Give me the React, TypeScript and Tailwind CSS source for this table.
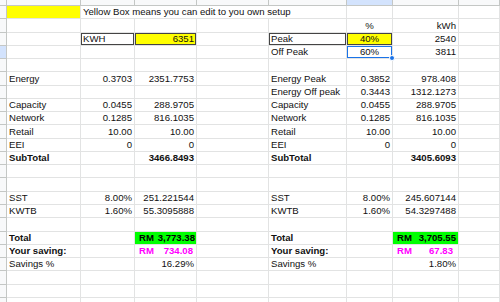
import type { ReactNode } from 'react'

type Cell = {
  text?: ReactNode
  align?: 'left' | 'right' | 'center'
  className?: string
  span?: number
}

// columns: row header, B .. I
const COLS = 'grid-cols-[7px_74px_54px_62px_72px_78px_46px_66px_41px]'
const ROW_COUNT = 23

const money = (amount: string, color: string, pr = 'pr-[2px]') => (
  <span className={`flex w-full justify-between pl-[4px] font-bold ${pr} ${color}`}>
    <span>RM</span>
    <span>{amount}</span>
  </span>
)

const line = (label: string, rate: string, value: string, bold = false): Cell[] => [
  { text: label, className: bold ? 'font-bold' : '' },
  { text: rate, align: 'right' },
  { text: value, align: 'right', className: bold ? 'font-bold' : '' },
]

// each row: map column index (1..8) -> cell
const rows: Record<number, Record<number, Cell>> = {
  0: {
    1: { className: 'bg-[#ffff00]' },
    2: { text: 'Yellow Box means you can edit to you own setup', span: 4, className: 'overflow-visible' },
  },
  1: {
    6: { text: '%', align: 'center' },
    7: { text: 'kWh', align: 'right' },
  },
  2: {
    2: { text: 'KWH', className: 'shadow-[inset_0_0_0_1px_#444]' },
    3: { text: '6351', align: 'right', className: 'bg-[#ffff00] shadow-[inset_0_0_0_1px_#444]' },
    5: { text: 'Peak', className: 'shadow-[inset_0_0_0_1px_#444]' },
    6: { text: '40%', align: 'center', className: 'bg-[#ffff00] shadow-[inset_0_0_0_1px_#444]' },
    7: { text: '2540', align: 'right' },
  },
  3: {
    5: { text: 'Off Peak' },
    6: { text: '60%', align: 'center', className: 'shadow-[inset_0_0_0_1px_#1a73e8]' },
    7: { text: '3811', align: 'right' },
  },
}

const pair = (r: number, left: Cell[] | null, right: Cell[]) => {
  rows[r] = {}
  if (left) left.forEach((c, i) => (rows[r][1 + i] = c))
  right.forEach((c, i) => (rows[r][5 + i] = c))
}

pair(5, line('Energy', '0.3703', '2351.7753'), line('Energy Peak', '0.3852', '978.408'))
pair(6, null, line('Energy Off peak', '0.3443', '1312.1273'))
pair(7, line('Capacity', '0.0455', '288.9705'), line('Capacity', '0.0455', '288.9705'))
pair(8, line('Network', '0.1285', '816.1035'), line('Network', '0.1285', '816.1035'))
pair(9, line('Retail', '10.00', '10.00'), line('Retail', '10.00', '10.00'))
pair(10, line('EEI', '0', '0'), line('EEI', '0', '0'))
pair(11, line('SubTotal', '', '3466.8493', true), line('SubTotal', '', '3405.6093', true))
pair(14, line('SST', '8.00%', '251.221544'), line('SST', '8.00%', '245.607144'))
pair(15, line('KWTB', '1.60%', '55.3095888'), line('KWTB', '1.60%', '54.3297488'))
pair(
  17,
  [{ text: 'Total', className: 'font-bold' }, {}, { text: money('3,773.38', 'text-black', 'pr-[1px]'), className: 'bg-[#00ff00] !px-0' }],
  [{ text: 'Total', className: 'font-bold' }, {}, { text: money('3,705.55', 'text-black'), className: 'bg-[#00ff00] !px-0' }],
)
pair(
  18,
  [{ text: 'Your saving:', className: 'font-bold' }, {}, { text: money('734.08', 'text-[#ff00ff]', 'pr-[3px]'), className: '!px-0' }],
  [{ text: 'Your saving:', className: 'font-bold' }, {}, { text: money('67.83', 'text-[#ff00ff]', 'pr-[5px]'), className: '!px-0' }],
)
pair(19, line('Savings %', '', '16.29%'), line('Savings %', '', '1.80%'))

function GridCell({ cell, row, col }: { cell?: Cell; row: number; col: number }) {
  const align =
    cell?.align === 'right' ? 'justify-end' : cell?.align === 'center' ? 'justify-center' : 'justify-start'
  const selected = row === 3 && col === 6
  return (
    <div
      className={`relative flex items-center whitespace-nowrap border-b border-r border-[#e2e3e3] px-[2px] ${align} ${
        cell?.className ?? 'overflow-hidden'
      }`}
      style={cell?.span ? { gridColumn: `span ${cell.span} / span ${cell.span}` } : undefined}
    >
      {cell?.text}
      {selected && (
        <span className="absolute -bottom-[3px] -right-[3px] z-10 h-[6px] w-[6px] rounded-full border border-white bg-[#1a73e8]" />
      )}
    </div>
  )
}

export default function App() {
  const cells: ReactNode[] = []

  // column header strip
  for (let c = 0; c < 9; c++) {
    cells.push(
      <div
        key={`h-${c}`}
        className={`border-b border-r border-[#c4c7c5] ${c === 6 ? 'bg-[#d3e3fd]' : 'bg-[#f8f9fa]'}`}
      />,
    )
  }

  for (let r = 0; r < ROW_COUNT; r++) {
    const row = rows[r] ?? {}
    cells.push(
      <div
        key={`rh-${r}`}
        className={`border-b border-r border-[#c4c7c5] ${r === 3 ? 'bg-[#d3e3fd]' : 'bg-[#f8f9fa]'}`}
      />,
    )
    let skip = 0
    for (let c = 1; c < 9; c++) {
      if (skip > 0) {
        skip--
        continue
      }
      const cell = row[c]
      if (cell?.span) skip = cell.span - 1
      cells.push(<GridCell key={`${r}-${c}`} cell={cell} row={r} col={c} />)
    }
  }

  return (
    <div className="h-[302px] w-[500px] overflow-hidden bg-white font-['Liberation_Sans',Arial,sans-serif] text-[9.6px] leading-none text-[#111]">
      <div className={`grid ${COLS} grid-rows-[6px] auto-rows-[13.27px]`}>{cells}</div>
    </div>
  )
}
